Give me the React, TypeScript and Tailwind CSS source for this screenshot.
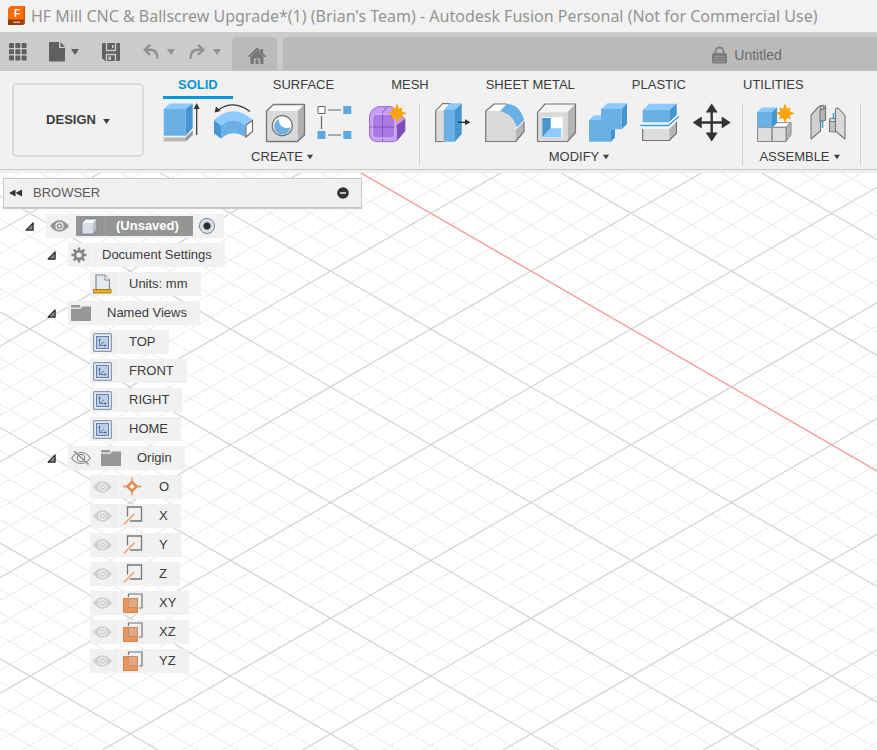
import { type ReactNode, useState } from "react";
import { twMerge } from "tailwind-merge";

/** Canvas grid: an isometric net, every fifth line is a major one */
const GRID_ORIGIN = { x: 430.8, y: 40.3 };
const GRID_SLOPE = 0.5773;
const GRID_STEP = 23.14;
const GRID_EXTENT = 2600;

const gridLine = (index: number, slope: number) => {
    const startY = GRID_ORIGIN.y + index * GRID_STEP - slope * GRID_ORIGIN.x;
    return `M0 ${startY.toFixed(1)}L${GRID_EXTENT} ${(startY + slope * GRID_EXTENT).toFixed(1)}`;
};

const gridIndexes = Array.from({ length: 200 }, (_, i) => i - 80);
const gridPath = (indexes: number[]) =>
    indexes.map((i) => gridLine(i, GRID_SLOPE) + gridLine(i, -GRID_SLOPE)).join("");
const minorGrid = gridPath(gridIndexes.filter((i) => i % 5 !== 0));
const majorGrid = gridPath(gridIndexes.filter((i) => i % 5 === 0));

function CanvasGrid() {
    return (
        <svg className="absolute inset-0 h-full w-full" fill="none" aria-hidden="true">
            <path d={minorGrid} stroke="#eeeeee" strokeWidth="1.2" />
            <path d={majorGrid} stroke="#d2d2d2" strokeWidth="1.2" />
            <path d={gridLine(0, GRID_SLOPE)} stroke="#ff9e9e" strokeWidth="1.3" />
        </svg>
    );
}

function Caret({ className }: { className?: string }) {
    return (
        <svg viewBox="0 0 8 6" className={twMerge("h-[6px] w-[8px]", className)} fill="currentColor" aria-hidden="true">
            <path d="M0 0h8L4 6z" />
        </svg>
    );
}

function Star({ x, y }: { x: number; y: number }) {
    const points = Array.from({ length: 16 }, (_, i) => {
        const radius = i % 2 ? 5 : i % 4 ? 8.2 : 10;
        const angle = (i * Math.PI) / 8;
        return `${(x + radius * Math.sin(angle)).toFixed(1)},${(y - radius * Math.cos(angle)).toFixed(1)}`;
    });
    return <polygon points={points.join(" ")} fill="#fba30a" />;
}

/* Ribbon icons, all drawn on a 38 x 40 board */

const ExtrudeIcon = (
    <>
        <path d="M.7 34.500h22l7-7v4.500l-7 6.500H.7z" fill="#b9b9b9" />
        <path d="M22.700 34.500l7-7v4.500l-7 6.500z" fill="#999" />
        <path d="M.7 6h22v26.700H.7z" fill="#6ab0e4" />
        <path d="M.7 6L7 .5h22.700l-7 5.500z" fill="#8ccaff" />
        <path d="M22.700 6l7-5.500V25l-7 7.700z" fill="#4595d1" />
        <path d="M33.700 32V4" stroke="#333" strokeWidth="1.200" />
        <path d="M33.700 0l3 6h-6z" fill="#333" />
    </>
);

const RevolveIcon = (
    <>
        <path d="M-1 17l7 5.500V35.500l-7-5z" fill="#4595d1" />
        <path d="M6 22.500Q18 12 30.500 22.500V34Q18 26 6 35.500z" fill="#6ab0e4" />
        <path d="M-1 17Q18-.5 38 17l-7.500 5.500Q18 12 6 22.500z" fill="#8ccaff" />
        <path d="M31 22l6.500-4.500v11L31 34z" fill="#fff" stroke="#666" strokeWidth="1.100" />
        <path d="M3 7Q19-4 35 8.500" fill="none" stroke="#333" strokeWidth="1.200" />
        <path d="M-.3 9.500L1 3.500l4.500 4.500z" fill="#333" />
    </>
);

const HoleIcon = (
    <g stroke="#777" strokeWidth="1.300" strokeLinejoin="round">
        <path d="M-.5 8l7-6.500h31l-7 6.500z" fill="#f8f8f8" stroke="none" />
        <path d="M30.500 8l7-6.500V32l-7 6.500z" fill="#b0b0b0" stroke="none" />
        <path d="M-.5 8h31v30.500h-31z" fill="#d9d9d9" stroke="none" />
        <path d="M-.5 8l7-6.500h31V32l-7 6.500h-31z" fill="none" />
        <circle cx="15.300" cy="22.700" r="10" fill="#fff" />
        <path d="M11.500 16.500a8.500 8.500 0 0 0 11.500 8.500a7.800 7.800 0 1 1-11.500-8.500z" fill="#6ab0e4" stroke="#4595d1" strokeWidth=".6" />
    </g>
);

const PatternIcon = (
    <>
        <path d="M9 7h13M2.500 13v13M9 32h13" stroke="#666" strokeWidth="1.200" />
        <path d="M-1 3.500h7v7h-7z" fill="#fff" stroke="#666" />
        <path d="M24.300 3h8v8h-8zM-1.500 28h8v8h-8zM24.300 28h8v8h-8z" fill="#5ba7e0" />
    </>
);

const FormIcon = (
    <>
        <path d="M8 3.500h14L34 16v12l-8 9.500Q23 39 19 38.700H6Q-1.500 38-1.500 31V13Q0 5 8 3.500z" fill="#c79cf8" />
        <path d="M26 22l8-6v12l-8 9.500z" fill="#7f4fb8" />
        <path d="M3 12h18q2 0 2 3v17q0 3-3 3H5q-3 0-3-4V15z" fill="#a97be3" />
        <path d="M-1.500 24h26l9-5M11.500 10v28M11.500 10l4-6" fill="none" stroke="#7f4fb8" strokeWidth=".9" />
        <path d="M8 3.500h12L34 16v12l-8 9.500Q23 39 19 38.700H6Q-1.500 38-1.500 31V13Q0 5 8 3.500z" fill="none" stroke="#8d5bc8" strokeWidth=".8" />
        <path d="M1.500 31V15q0-4 4-4H19q5 0 5 5v14q0 5-4 5H6q-4.500 0-4.500-4z" fill="none" stroke="#d8bafc" />
        <Star x={26} y={10.3} />
    </>
);

const PressPullIcon = (
    <>
        <path d="M1.700 8l7-7.300h7L10 8v30.500H1.700z" fill="#dcdcdc" stroke="#777" strokeWidth="1.200" />
        <path d="M2.300 8l6.700-6.500h6L9.500 8v30.500h1V7z" fill="#fff" />
        <path d="M10 7h11v31.700H10z" fill="#6ab0e4" />
        <path d="M10 7L16 .3h11.700L21 7z" fill="#8ccaff" />
        <path d="M21 7L27.700.3V31L21 38.700z" fill="#4595d1" />
        <path d="M24 19.300h8" stroke="#333" strokeWidth="1.400" />
        <path d="M31 16.300l5.500 3-5.500 3z" fill="#333" />
    </>
);

const FilletIcon = (
    <>
        <path d="M-.3 8L8 1h13l-7 7z" fill="#fff" />
        <path d="M29.700 27L38 18.500v10.200l-8.300 10z" fill="#b5b5b5" />
        <path d="M-.3 8H14Q29 11 29.700 27v11.500h-30z" fill="#d9d9d9" />
        <path d="M21 1H8L-.3 8v30.500h30l8.300-9.800V18.500" fill="none" stroke="#777" strokeWidth="1.200" strokeLinejoin="round" />
        <path d="M14 8l7-7.300Q34 2 38 17l-7.300 7.500Q27 11 14 8z" fill="#6ab0e4" />
    </>
);

const ShellIcon = (
    <>
        <path d="M-.5 9.300L7 1h30.500l-8 8.300z" fill="#f4f4f4" />
        <path d="M29.500 9.300l8-8.300v28.500l-8 9z" fill="#b5b5b5" />
        <path d="M-.5 9.300h30v29.200h-30z" fill="#d9d9d9" />
        <path d="M-.5 9.300L7 1h30.500v28.500l-8 9h-30z" fill="none" stroke="#777" strokeWidth="1.200" strokeLinejoin="round" />
        <path d="M4.300 14h20.400v20.500H4.300z" fill="#fff" />
        <path d="M4.300 15h8.400v10.300l-8.400 9z" fill="#4595d1" />
        <path d="M4.300 34.300l8.400-9h10.600v9z" fill="#8ccaff" />
    </>
);

const CombineIcon = (
    <>
        <path d="M-1 17l5-4.700h7V6L17.500.3H37L31.700 6 18 17z" fill="#8ccaff" />
        <path d="M31.700 6L37 .3V21l-5.300 5.300zM21 26.300h4v8l-4 4.400z" fill="#4595d1" />
        <path d="M11 6h20.700v20.300H21v12.400H-1V17h12z" fill="#6ab0e4" />
    </>
);

const SplitIcon = (
    <>
        <path d="M.7 26h26.600v11.500H.7z" fill="#dcdcdc" />
        <path d="M27.300 26l7.200-7.300v11.500l-7.200 7.300z" fill="#b5b5b5" />
        <path d="M.7 26v11.500h26.600l7.200-7.300V18.700" fill="none" stroke="#777" strokeWidth="1.200" />
        <path d="M.7 7h26.600v12.300H.7z" fill="#6ab0e4" />
        <path d="M.7 7L7.300.7h27.400L27.300 7z" fill="#8ccaff" />
        <path d="M27.300 7L34.700.7V12l-7.400 7.300z" fill="#4595d1" />
        <path d="M-1.700 22.500h28L37 13.500" fill="none" stroke="#fff" strokeWidth="4" />
        <path d="M-1.700 22.500h28L37 13.500" fill="none" stroke="#2d9be3" strokeWidth="1.300" />
    </>
);

const MoveIcon = (
    <>
        <path d="M17.700 6v27M4 19.500h27" stroke="#333" strokeWidth="2.400" />
        <path d="M17.700.5l6 9h-12zM17.700 38.500l6-9h-12zM-1.300 19.500l9-6v12zM36.700 19.500l-9-6v12z" fill="#333" />
    </>
);

const ComponentIcon = (
    <>
        <g stroke="#888" strokeLinejoin="round">
            <path d="M15 24.300l5-4.600h14l-5 4.600z" fill="#fff" />
            <path d="M29 24.300l5-4.600v12l-5 6.800z" fill="#b5b5b5" />
            <path d="M.5 24.300H15v14.200H.5zM15 24.300h14v14.200H15z" fill="#dcdcdc" />
        </g>
        <path d="M0 9h15v15.300H0z" fill="#6ab0e4" />
        <path d="M0 9l5-4.500h15L15 9z" fill="#8ccaff" />
        <path d="M15 9l5-4.500v15l-5 4.800z" fill="#4595d1" />
        <Star x={28} y={10.3} />
    </>
);

const JointIcon = (
    <g stroke="#777" strokeWidth="1.100" strokeLinejoin="round">
        <path d="M2 12L9.500 4q3-3 7-1v14l-5 1.500V28L2 36z" fill="#cfcfcf" />
        <path d="M11 6.500q3 1 5.500-2.500v13l-5.500 1.500z" fill="#b5b5b5" />
        <circle cx="13" cy="4.500" r="1.500" fill="#fff" />
        <path d="M26.500 6.500q1-2 3-1l6.500 7V36l-9.500-8z" fill="#dadada" />
        <path d="M20.500 17v11.500l6 .5V17z" fill="#c2c2c2" />
        <ellipse cx="23.500" cy="17" rx="3" ry="1.700" fill="#eee" />
        <path d="M13.500 18v7M24.500 10v6.500" stroke="#2d9be3" strokeWidth="1.400" />
    </g>
);

interface Tool {
    name: string;
    icon: ReactNode;
}

const groups: { label: string; tools: Tool[] }[] = [
    {
        label: "CREATE",
        tools: [
            { name: "Extrude", icon: ExtrudeIcon },
            { name: "Revolve", icon: RevolveIcon },
            { name: "Hole", icon: HoleIcon },
            { name: "Rectangular Pattern", icon: PatternIcon },
            { name: "Create Form", icon: FormIcon },
        ],
    },
    {
        label: "MODIFY",
        tools: [
            { name: "Press Pull", icon: PressPullIcon },
            { name: "Fillet", icon: FilletIcon },
            { name: "Shell", icon: ShellIcon },
            { name: "Combine", icon: CombineIcon },
            { name: "Split Body", icon: SplitIcon },
            { name: "Move/Copy", icon: MoveIcon },
        ],
    },
    {
        label: "ASSEMBLE",
        tools: [
            { name: "New Component", icon: ComponentIcon },
            { name: "Joint", icon: JointIcon },
        ],
    },
];

const tabs = ["SOLID", "SURFACE", "MESH", "SHEET METAL", "PLASTIC", "UTILITIES"];

function TitleBar() {
    return (
        <header className="flex h-8 shrink-0 items-center gap-[5px] bg-[#f2f2f2] pl-2">
            <svg viewBox="0 0 18 20" className="h-5 w-[18px] shrink-0" aria-hidden="true">
                <path d="M2.500 0H17v17l-2 2H0V2.500z" fill="#ff6b00" />
                <path d="M0 13.500h17V17l-2 2H0z" fill="#963c08" />
                <path d="M15.500 1.500L17 0v17l-1.500 1.500z" fill="#c9540a" />
                <path d="M5.500 16.300h6.500" stroke="#f3d6c2" strokeWidth="1.600" strokeDasharray="1.300 .4" />
                <text x="9" y="11" textAnchor="middle" fontSize="10" fontWeight="700" fill="#fff">
                    F
                </text>
            </svg>
            <h1 className="truncate pb-px font-['Noto_Sans','Open_Sans',sans-serif] text-[16px] leading-6 text-[#949494]">
                HF Mill CNC &amp; Ballscrew Upgrade*(1) (Brian's Team) - Autodesk Fusion Personal (Not for Commercial
                Use)
            </h1>
        </header>
    );
}

function QuickAccessBar() {
    return (
        <div className="flex h-[39px] shrink-0 items-end overflow-hidden border-b border-[#c3c3c3] bg-[#cbcbcb]">
            <div className="flex h-9 w-[232px] shrink-0 items-center pl-[9px] text-[#606060]">
                <button aria-label="Data panel">
                    <svg viewBox="0 0 18 18" className="size-[18px]" fill="currentColor">
                        {[0, 6.3, 12.6].map((y) =>
                            [0, 6.3, 12.6].map((x) => <rect key={`${x}-${y}`} x={x} y={y} width="5" height="5" rx=".8" />)
                        )}
                    </svg>
                </button>
                <button aria-label="File" className="ml-[22px] flex items-center gap-[6px]">
                    <svg viewBox="0 0 16 20" className="h-5 w-4" fill="currentColor">
                        <path d="M0 1q0-1 1-1h9v6h6v12q0 1.500-1 1.500H1q-1 0-1-1zM11.500 0L16 4.700h-4.500z" />
                    </svg>
                    <Caret />
                </button>
                <button aria-label="Save" className="ml-[23px]">
                    <svg viewBox="0 0 18 18" className="size-[18px]">
                        <path d="M1 0h16q1 0 1 1v16q0 1-1 1H3l-3-3V1q0-1 1-1z" fill="#606060" />
                        <path d="M4.500 0v7.500h9V0M4.500 18v-6.500h9V18" fill="none" stroke="#cbcbcb" strokeWidth="1.400" />
                        <path d="M10 2h1.500v3H10zM6.500 13.500H9V17H6.500z" fill="#cbcbcb" />
                    </svg>
                </button>
                <button aria-label="Undo" className="ml-[23px] flex items-center gap-2 text-[#919191]">
                    <svg viewBox="0 0 16 16" className="size-4" fill="none" stroke="currentColor" strokeWidth="2.400">
                        <path d="M7 .8L1.800 5.800 7 10.800M2 5.800h6q6.500.5 6.500 9" />
                    </svg>
                    <Caret />
                </button>
                <button aria-label="Redo" className="ml-[14px] flex items-center gap-2 text-[#919191]">
                    <svg viewBox="0 0 16 16" className="size-4" fill="none" stroke="currentColor" strokeWidth="2.400">
                        <path d="M9 .8l5.200 5L9 10.800M14 5.800H8Q1.500 6.300 1.500 14.800" />
                    </svg>
                    <Caret />
                </button>
            </div>
            <button
                aria-label="Home"
                className="flex h-[33px] w-[45px] shrink-0 items-center justify-center rounded-t-[5px] bg-[#bababa] pt-[5px] pl-1"
            >
                <svg viewBox="0 0 18 18" className="size-[18px]" fill="#767676">
                    <path d="M9 .5l3.500 3.300V2H15v4.200l3 3-1.200 1.100L9 3.200l-7.800 7.100L0 9.200z" />
                    <path d="M2.500 9.500L9 3.500l6.500 6V17h-3.300v-5.500H5.800V17H2.500zM7.500 12.500h3V17h-3z" />
                </svg>
            </button>
            <button className="ml-[6px] flex h-[33px] w-[928px] shrink-0 items-center justify-center gap-[7px] rounded-t-[5px] bg-[#bababa] pt-[3px] text-[14px] text-[#6b6b6b]">
                <svg viewBox="0 0 15 18" className="h-[18px] w-[15px]" aria-hidden="true">
                    <path d="M3.500 8V5.500a4 4 0 0 1 8 0V8" fill="none" stroke="#858585" strokeWidth="2" />
                    <rect y="7" width="15" height="10.500" rx="1.500" fill="#7d7d7d" />
                    <path d="M2 10.500h11M2 13h11M2 15.500h11" stroke="#9a9a9a" strokeWidth=".8" />
                </svg>
                Untitled
            </button>
        </div>
    );
}

function Ribbon() {
    const [activeTab, setActiveTab] = useState("SOLID");

    return (
        <section className="flex h-[102px] shrink-0 overflow-hidden border-b-3 border-[#f0f0f0] bg-[#f1f1f1] text-[#3c3c3c]">
            <div className="flex flex-1 border-b border-[#c6c6c6] pl-3">
                <button className="mt-[12px] flex h-[74px] w-[132px] shrink-0 items-center justify-center gap-[7px] rounded-[5px] border-2 border-[#dadada] text-[13px] font-bold">
                    DESIGN
                    <Caret className="mt-[2px] h-[5px] w-[7px]" />
                </button>
                <div className="ml-[19px]">
                    <nav className="flex h-7 gap-[23px] pt-1">
                        {tabs.map((tab) => (
                            <button
                                key={tab}
                                onClick={() => setActiveTab(tab)}
                                className={twMerge(
                                    "border-b-3 border-transparent px-[17px] pb-[2px] text-[13px] leading-[18px] whitespace-nowrap",
                                    tab === activeTab && "border-[#0a96dc] px-[15px] font-bold text-[#0a96dc]"
                                )}
                            >
                                {tab}
                            </button>
                        ))}
                    </nav>
                    <div className="mt-1 flex">
                        {groups.map((group) => (
                            <div
                                key={group.label}
                                className="min-w-[118px] border-r border-[#d2d2d2] pr-[10px] pl-[14px] first:pl-0"
                            >
                                <div className="flex gap-[14px]">
                                    {group.tools.map((tool) => (
                                        <button key={tool.name} aria-label={tool.name} className="shrink-0">
                                            <svg viewBox="0 0 38 40" className="h-10 w-[38px] overflow-visible">
                                                {tool.icon}
                                            </svg>
                                        </button>
                                    ))}
                                </div>
                                <button className="flex w-full items-center justify-center gap-1 pt-[5px] pr-2 text-[13px] leading-[18px]">
                                    {group.label}
                                    <Caret className="h-[6px] w-[6px]" />
                                </button>
                            </div>
                        ))}
                    </div>
                </div>
            </div>
        </section>
    );
}

/* Browser tree icons */

const EyeIcon = (
    <svg viewBox="0 0 20 14" className="h-[14px] w-[19px]">
        <path d="M0 7Q4.500 1 10 1t10 6q-4.500 6-10 6T0 7z" fill="#969696" />
        <circle cx="10" cy="7" r="4.300" fill="#f0f0f0" />
        <circle cx="10" cy="7" r="3" fill="#969696" />
        <circle cx="10" cy="7" r="1.300" fill="#f0f0f0" />
    </svg>
);

const FaintEyeIcon = <span className="opacity-35">{EyeIcon}</span>;

const EyeOffIcon = (
    <svg viewBox="0 0 20 14" className="h-[14px] w-5" fill="none" stroke="#8e8e8e" strokeWidth="1.200">
        <path d="M.7 7Q4.500 1.500 10 1.500T19.300 7q-3.800 5.500-9.300 5.500T.7 7z" />
        <circle cx="10" cy="7" r="3.700" />
        <path d="M3 0l14.500 13.500" strokeWidth="1.500" />
    </svg>
);

const FolderIcon = (
    <svg viewBox="0 0 20 16" className="h-4 w-5" fill="#979797">
        <path d="M0 3.800h9.500L11 1.500h9V16H0zM0 1.200Q0 0 1 0h7.500L9.500 1.500 9 2.500H0z" />
    </svg>
);

const GearIcon = (
    <svg viewBox="0 0 16 16" className="size-4">
        <g stroke="#858585" strokeWidth="2.600">
            <path d="M8 .5v15M.5 8h15M2.700 2.700l10.600 10.600M13.300 2.700L2.700 13.300" />
        </g>
        <circle cx="8" cy="8" r="5.300" fill="#858585" />
        <circle cx="8" cy="8" r="2.600" fill="#f0f0f0" />
    </svg>
);

const UnitsIcon = (
    <svg viewBox="0 0 19 20" className="h-5 w-[19px]">
        <path d="M3 1h9l4.500 5v10H3z" fill="#e4e8f0" stroke="#85888e" strokeWidth="1.200" />
        <path d="M12 1v5h4.500" fill="#fff" stroke="#85888e" />
        <path d="M.5 15.500h17.500V19H.5z" fill="#f3b829" stroke="#b07a10" />
        <path d="M4 15.500v2M7.500 15.500v2M11 15.500v2M14.500 15.500v2" stroke="#b07a10" strokeWidth=".8" />
    </svg>
);

const ViewIcon = (
    <svg viewBox="0 0 19 19" className="size-[19px]">
        <rect x=".6" y=".6" width="17.800" height="17.800" rx="1" fill="#e6edf6" stroke="#8e99ac" strokeWidth="1.200" />
        <rect x="3.500" y="3.500" width="12" height="12" fill="#b9cfea" stroke="#6481ad" />
        <path d="M6.500 6v6.500H13M6.500 12.500L11 9" fill="none" stroke="#5c6f8c" strokeWidth=".8" />
        <path d="M5.300 7.500L6.500 5.500l1.200 2zM11.700 11.300l2 1.200-2 1.200z" fill="#44556e" />
    </svg>
);

const BodyIcon = (
    <svg viewBox="0 0 17 17" className="size-[17px]">
        <path d="M1 5.500Q1 4 2 3.500L4.500 1H14q2 0 2 2v9l-3 3.500q-.6.500-2 .5H2q-1 0-1-1z" fill="#b6bdc9" stroke="#6e7580" strokeWidth=".8" />
        <path d="M1.500 5L5 1.500h10.500L12 5z" fill="#f6f7f9" />
        <path d="M1.500 5H12v10.500H1.500z" fill="#d9dde5" />
    </svg>
);

const PointIcon = (
    <svg viewBox="0 0 20 20" className="size-5" fill="none" stroke="#e08e58">
        <path d="M9 .5v5M9 14.500v4M0 9.500h5M13.500 9.500h5" strokeWidth="1.300" />
        <path d="M9 5l4.500 4.500L9 14 4.500 9.500z" strokeWidth="2.800" fill="#fff" />
    </svg>
);

const AxisIcon = (
    <svg viewBox="0 0 20 20" className="size-5" fill="none">
        <path d="M4.500 10.500V1h14v14H7" stroke="#777" strokeWidth="1.300" />
        <path d="M.8 18.500L11.500 7.800" stroke="#f0a068" strokeWidth="1.600" />
    </svg>
);

const PlaneIcon = (
    <svg viewBox="0 0 20 20" className="size-5">
        <path d="M.5 5.500h14v14H.5z" fill="#e8965c" stroke="#d8834a" />
        <path d="M5.500 5.500h9v9h-9z" fill="#e3aa82" stroke="#c08860" strokeWidth=".8" />
        <path d="M5.500 4V1h13.500v14h-3" fill="none" stroke="#777" strokeWidth="1.200" />
    </svg>
);

interface TreeRow {
    label: string;
    level: 1 | 2;
    icons: ReactNode[];
    narrowIcon?: boolean;
}

const treeRows: TreeRow[] = [
    { label: "Document Settings", level: 1, icons: [GearIcon], narrowIcon: true },
    { label: "Units: mm", level: 2, icons: [UnitsIcon] },
    { label: "Named Views", level: 1, icons: [FolderIcon] },
    { label: "TOP", level: 2, icons: [ViewIcon] },
    { label: "FRONT", level: 2, icons: [ViewIcon] },
    { label: "RIGHT", level: 2, icons: [ViewIcon] },
    { label: "HOME", level: 2, icons: [ViewIcon] },
    { label: "Origin", level: 1, icons: [EyeOffIcon, FolderIcon] },
    { label: "O", level: 2, icons: [FaintEyeIcon, PointIcon] },
    { label: "X", level: 2, icons: [FaintEyeIcon, AxisIcon] },
    { label: "Y", level: 2, icons: [FaintEyeIcon, AxisIcon] },
    { label: "Z", level: 2, icons: [FaintEyeIcon, AxisIcon] },
    { label: "XY", level: 2, icons: [FaintEyeIcon, PlaneIcon] },
    { label: "XZ", level: 2, icons: [FaintEyeIcon, PlaneIcon] },
    { label: "YZ", level: 2, icons: [FaintEyeIcon, PlaneIcon] },
];

function Toggle({ label }: { label: string }) {
    return (
        <button aria-label={`Collapse ${label}`} className="flex w-[22px] shrink-0 items-center pl-px">
            <svg viewBox="0 0 10 10" className="size-[9px]" aria-hidden="true">
                <path d="M9 1v8H1.200z" fill="#888" stroke="#222" strokeWidth="1.300" strokeLinejoin="round" />
            </svg>
        </button>
    );
}

function BrowserPanel() {
    return (
        <aside className="relative w-[362px] pt-[5px] pl-[3px] text-[13px] text-[#3c3c3c]">
            <div className="flex h-[31px] items-center border border-b-2 border-[#c9c9c9] bg-[#f0f0f0] pr-3 pl-[5px]">
                <button aria-label="Collapse browser">
                    <svg viewBox="0 0 13 8" className="h-2 w-[13px]" fill="#333">
                        <path d="M6.500.5v7L0 4zM13 .5v7L6.500 4z" />
                    </svg>
                </button>
                <h2 className="ml-[11px] flex-1 text-[#5a5a5a]">BROWSER</h2>
                <button aria-label="Hide browser">
                    <svg viewBox="0 0 12 12" className="size-3">
                        <circle cx="6" cy="6" r="5.800" fill="#333" />
                        <path d="M3 6h6" stroke="#f0f0f0" strokeWidth="1.500" />
                    </svg>
                </button>
            </div>
            <ul className="mt-[5px] flex flex-col gap-[5px]">
                <li className="flex h-6 pl-[21px]">
                    <Toggle label="(Unsaved)" />
                    <div className="flex items-center bg-[#f1f1f1] pr-[9px]">
                        <button aria-label="Show or hide (Unsaved)" className="w-[30px] pl-1">
                            {EyeIcon}
                        </button>
                        <div className="flex h-5 items-center bg-[#959595]">
                            <span className="flex h-full w-[30px] items-center border-r border-[#a3a3a3] pl-[5px]">
                                {BodyIcon}
                            </span>
                            <span className="pr-[14px] pl-[10px] font-bold text-white">(Unsaved)</span>
                        </div>
                        <input
                            type="radio"
                            defaultChecked
                            aria-label="Activate (Unsaved)"
                            className="ml-[6px] size-4 appearance-none rounded-full border border-[#777] bg-[radial-gradient(circle,#2c2c2c_3px,#c3cbd9_4px,#eef1f6_7px)]"
                        />
                    </div>
                </li>
                {treeRows.map((row) => (
                    <li key={row.label} className={twMerge("flex h-6", row.level === 1 ? "pl-[43px]" : "pl-[87px]")}>
                        {row.level === 1 && <Toggle label={row.label} />}
                        <div className="flex items-center bg-[#f1f1f1] pr-[13px]">
                            {row.icons.map((icon, i) => (
                                <span
                                    key={i}
                                    className={twMerge(
                                        "flex h-full w-[30px] items-center border-r border-[#f6f6f6] pl-[3px]",
                                        row.narrowIcon && "w-[25px]"
                                    )}
                                >
                                    {icon}
                                </span>
                            ))}
                            <span className="pl-[9px]">{row.label}</span>
                        </div>
                    </li>
                ))}
            </ul>
        </aside>
    );
}

export default function App() {
    return (
        <div className="flex min-h-screen flex-col overflow-hidden bg-white font-['Liberation_Sans',Arial,sans-serif]">
            <TitleBar />
            <QuickAccessBar />
            <Ribbon />
            <main className="relative flex-1">
                <CanvasGrid />
                <BrowserPanel />
            </main>
        </div>
    );
}
